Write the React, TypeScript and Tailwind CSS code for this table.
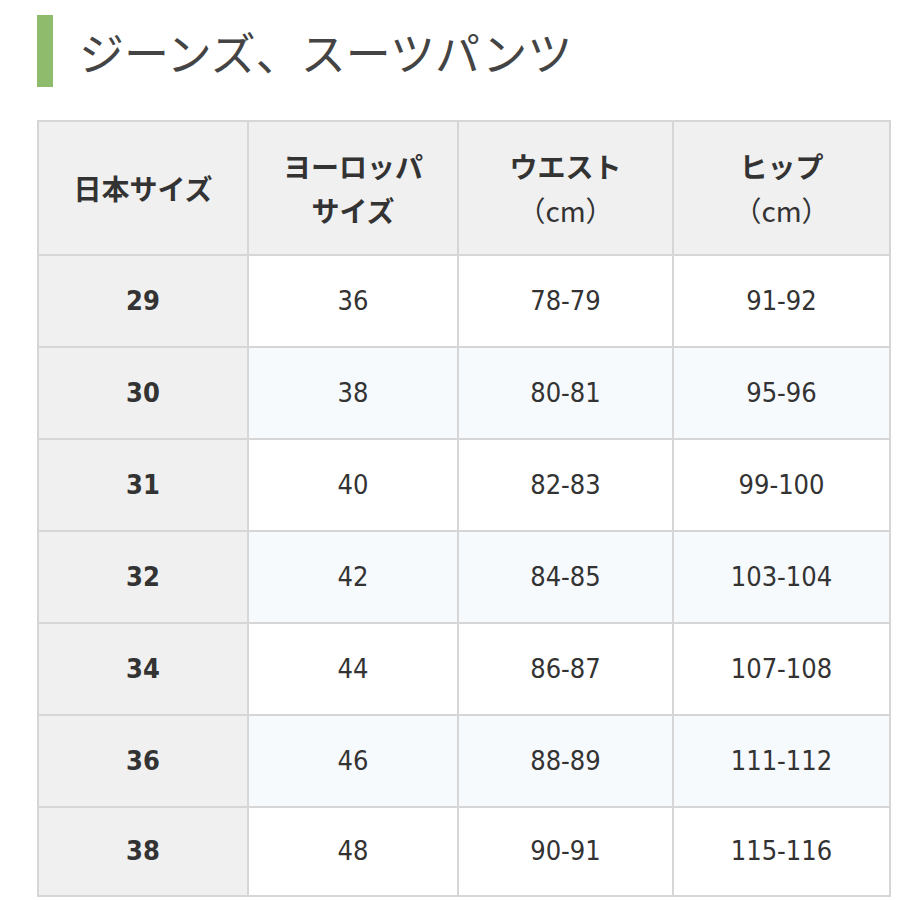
import React from "react";

const rows = [
  ["29", "36", "78-79", "91-92"],
  ["30", "38", "80-81", "95-96"],
  ["31", "40", "82-83", "99-100"],
  ["32", "42", "84-85", "103-104"],
  ["34", "44", "86-87", "107-108"],
  ["36", "46", "88-89", "111-112"],
  ["38", "48", "90-91", "115-116"],
];

const jp = { fontFamily: '"Noto Sans CJK JP", "Noto Sans", sans-serif' };
const num = {
  fontFamily: '"DejaVu Sans Condensed", "DejaVu Sans", "Noto Sans CJK JP", sans-serif',
  fontStretch: "condensed",
};

export default function App() {
  return (
    <div className="w-[900px] h-[900px] bg-white overflow-hidden text-[#333]" style={jp}>
      {/* 見出し */}
      <div className="flex items-center pl-[37px] pt-[15px] h-[87px]">
        <div className="w-[16px] h-[72px] bg-[#8fbb6c]" />
        <h1 className="ml-[26px] text-[45px] leading-none text-[#444] font-normal">
          ジーンズ、スーツパンツ
        </h1>
      </div>

      <table className="ml-[37px] mt-[33px] border-collapse table-fixed w-[852px]">
        <colgroup>
          <col className="w-[210px]" />
          <col className="w-[210px]" />
          <col className="w-[215px]" />
          <col className="w-[217px]" />
        </colgroup>
        <thead>
          <tr className="h-[134px] bg-[#f0f0f0]">
            <th className="border-2 border-[#d6d6d6] text-[28px] font-bold leading-[44px]">日本サイズ</th>
            <th className="border-2 border-[#d6d6d6] text-[28px] font-bold leading-[44px]">
              ヨーロッパ
              <br />
              サイズ
            </th>
            <th className="border-2 border-[#d6d6d6] text-[28px] font-bold leading-[44px]">
              ウエスト
              <br />
              <span className="font-normal">（cm）</span>
            </th>
            <th className="border-2 border-[#d6d6d6] text-[28px] font-bold leading-[44px]">
              ヒップ
              <br />
              <span className="font-normal">（cm）</span>
            </th>
          </tr>
        </thead>
        <tbody>
          {rows.map((r, i) => (
            <tr
              key={r[0]}
              className={
                (i === rows.length - 1 ? "h-[89px] " : "h-[92px] ") + (i % 2 === 1 ? "bg-[#f7fafd]" : "bg-white")
              }
            >
              <td className="border-2 border-[#d6d6d6] bg-[#f0f0f0] text-center text-[27px] font-bold" style={num}>
                {r[0]}
              </td>
              {r.slice(1).map((v, j) => (
                <td key={j} className="border-2 border-[#d6d6d6] text-center text-[27px]" style={num}>
                  {v}
                </td>
              ))}
            </tr>
          ))}
        </tbody>
      </table>
    </div>
  );
}
